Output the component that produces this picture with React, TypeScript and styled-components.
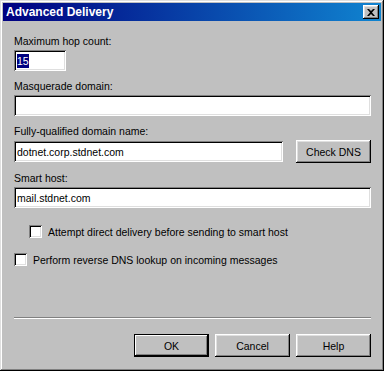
import React from 'react';
import styled, { createGlobalStyle } from 'styled-components';

const GlobalStyle = createGlobalStyle`
  html, body {
    margin: 0;
    padding: 0;
    background: #c0c0c0;
  }
  * {
    box-sizing: border-box;
  }
`;

const Window = styled.div`
  width: 384px;
  height: 371px;
  padding: 3px;
  background: #c0c0c0;
  box-shadow: inset -1px -1px #000000, inset 1px 1px #dfdfdf,
    inset -2px -2px #808080, inset 2px 2px #ffffff;
  display: flex;
  flex-direction: column;
  font-family: 'Liberation Sans', Arial, sans-serif;
  font-size: 10.5px;
  color: #000;
`;

const TitleBar = styled.div`
  height: 18px;
  display: flex;
  align-items: center;
  justify-content: space-between;
  padding: 0 2px 0 2px;
  background: linear-gradient(90deg, #000080 0%, #1084d0 100%);
`;

const Title = styled.div`
  color: #fff;
  font-weight: bold;
  font-size: 12px;
  padding-left: 1px;
`;

const CloseBox = styled.div`
  width: 16px;
  height: 14px;
  background: #c0c0c0;
  box-shadow: inset -1px -1px #000000, inset 1px 1px #ffffff,
    inset -2px -2px #808080, inset 2px 2px #dfdfdf;
  display: flex;
  align-items: center;
  justify-content: center;
`;

const Body = styled.div`
  flex: 1;
  padding: 14px 10px 0 11px;
  display: flex;
  flex-direction: column;
`;

const Label = styled.div`
  line-height: 13px;
  height: 13px;
  margin-bottom: 2px;
`;

const Field = styled.div`
  display: flex;
  flex-direction: column;
  margin-bottom: 9px;
`;

const Row = styled.div`
  display: flex;
  align-items: center;
  gap: 13px;
`;

const Edit = styled.div<{ $width?: number }>`
  width: ${(p) => (p.$width ? `${p.$width}px` : '100%')};
  height: 21px;
  background: #fff;
  box-shadow: inset 1px 1px #808080, inset -1px -1px #ffffff,
    inset 2px 2px #000000, inset -2px -2px #dfdfdf;
  padding: 0 3px;
  display: flex;
  align-items: center;
  white-space: nowrap;
  overflow: hidden;
`;

const Selected = styled.span`
  background: #000080;
  color: #fff;
  line-height: 14px;
`;

const Button = styled.div<{ $default?: boolean }>`
  width: 75px;
  height: 23px;
  background: #c0c0c0;
  display: flex;
  align-items: center;
  justify-content: center;
  box-shadow: ${(p) =>
    p.$default
      ? 'inset -1px -1px #000000, inset 1px 1px #000000, inset -2px -2px #000000, inset 2px 2px #ffffff, inset -3px -3px #808080'
      : 'inset -1px -1px #000000, inset 1px 1px #ffffff, inset -2px -2px #808080, inset 2px 2px #dfdfdf'};
`;

const CheckRow = styled.div<{ $indent?: number; $top: number }>`
  display: flex;
  align-items: center;
  gap: 6px;
  margin-left: ${(p) => p.$indent || 0}px;
  margin-top: ${(p) => p.$top}px;
  height: 13px;
`;

const CheckBox = styled.div`
  width: 13px;
  height: 13px;
  background: #fff;
  box-shadow: inset 1px 1px #808080, inset -1px -1px #ffffff,
    inset 2px 2px #000000, inset -2px -2px #dfdfdf;
`;

const Separator = styled.div`
  margin-top: auto;
  height: 2px;
  border-top: 1px solid #808080;
  border-bottom: 1px solid #ffffff;
`;

const Footer = styled.div`
  display: flex;
  justify-content: flex-end;
  gap: 6px;
  padding: 15px 0 11px;
`;

export default function App() {
  return (
    <>
      <GlobalStyle />
      <Window>
        <TitleBar>
          <Title>Advanced Delivery</Title>
          <CloseBox>
            <svg width="8" height="7" viewBox="0 0 8 7">
              <path d="M0 0h2l2 2 2-2h2L5 3.5 8 7H6L4 5 2 7H0l3-3.5z" fill="#000" />
            </svg>
          </CloseBox>
        </TitleBar>
        <Body>
          <Field>
            <Label>Maximum hop count:</Label>
            <Edit $width={52}>
              <Selected>15</Selected>
            </Edit>
          </Field>
          <Field>
            <Label>Masquerade domain:</Label>
            <Edit />
          </Field>
          <Field>
            <Label>Fully-qualified domain name:</Label>
            <Row>
              <Edit $width={269}>dotnet.corp.stdnet.com</Edit>
              <Button>Check DNS</Button>
            </Row>
          </Field>
          <Field>
            <Label>Smart host:</Label>
            <Edit>mail.stdnet.com</Edit>
          </Field>
          <CheckRow $indent={15} $top={8}>
            <CheckBox />
            <span>Attempt direct delivery before sending to smart host</span>
          </CheckRow>
          <CheckRow $top={15}>
            <CheckBox />
            <span>Perform reverse DNS lookup on incoming messages</span>
          </CheckRow>
          <Separator />
          <Footer>
            <Button $default>OK</Button>
            <Button>Cancel</Button>
            <Button>Help</Button>
          </Footer>
        </Body>
      </Window>
    </>
  );
}
